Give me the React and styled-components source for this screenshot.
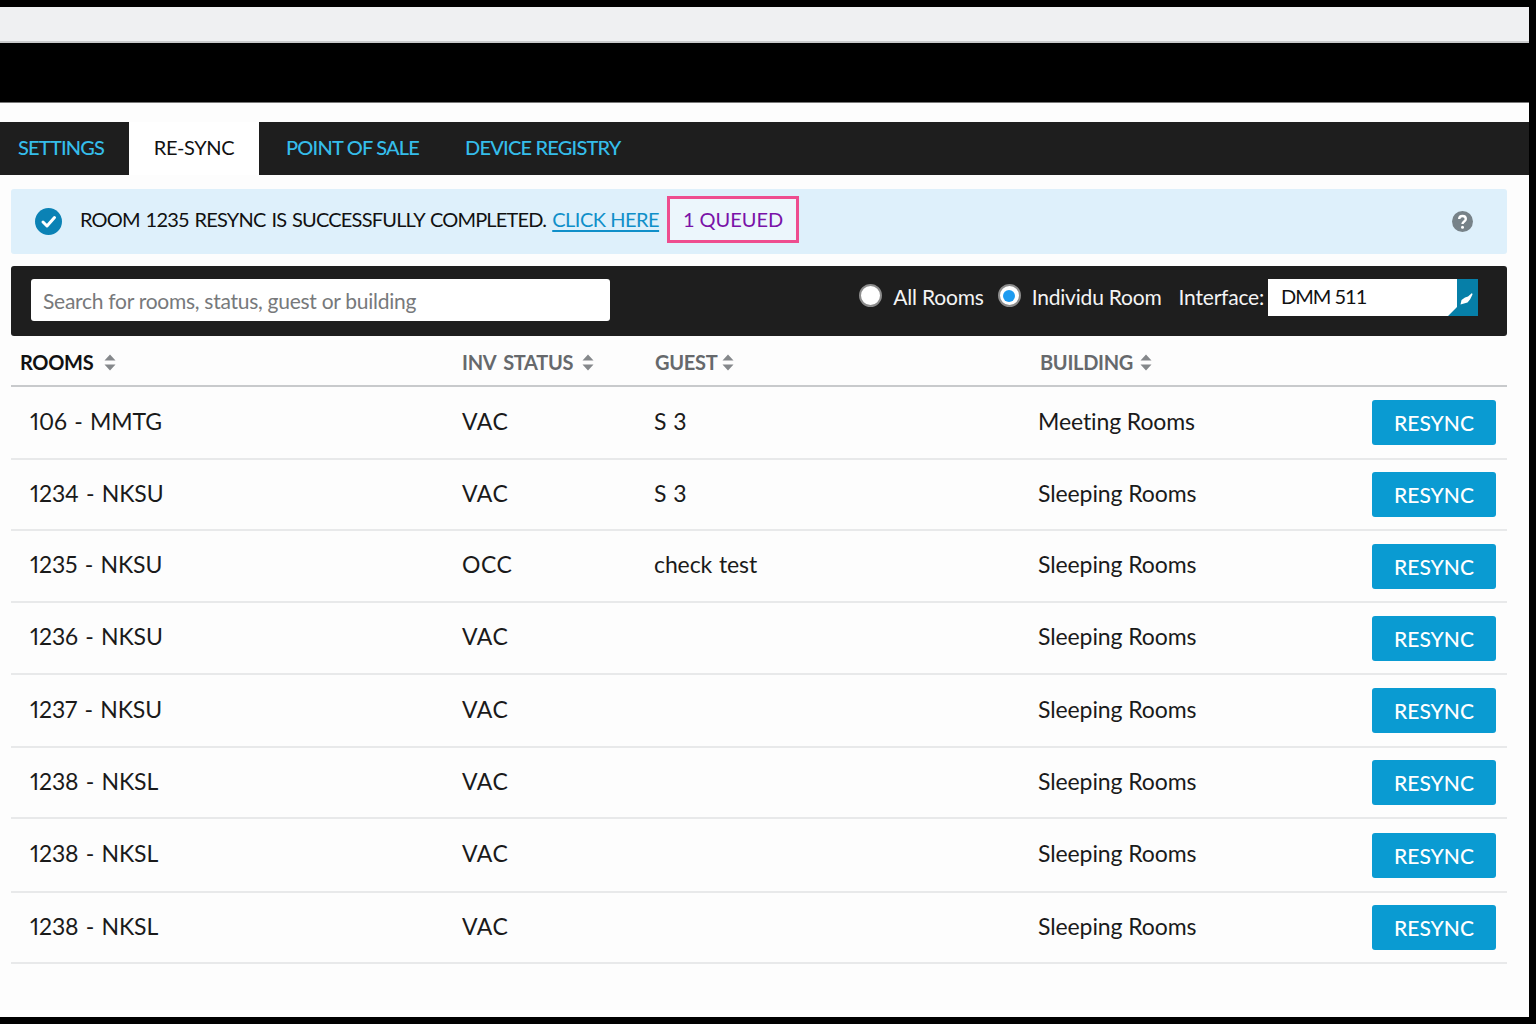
import React from 'react';
import styled, { createGlobalStyle } from 'styled-components';

const GlobalStyle = createGlobalStyle`
    html, body {
        margin: 0;
        padding: 0;
        background: #000;
    }
    body {
        font-family: Lato, "Open Sans", sans-serif;
    }
`

const Page = styled.div`
    width: 1529px;
    height: 1017px;
    background: #fdfdfd;
    overflow: hidden;
    display: flex;
    flex-direction: column;
`
const TopStrip = styled.div`
    height: 7px;
    background: #000;
`
const BrowserBar = styled.div`
    height: 34px;
    background: #eff0f2;
    border-bottom: 2px solid #c9cacc;
`
const BlackBand = styled.div`
    height: 59px;
    background: #000;
    border-bottom: 1px solid #777;
`
const Nav = styled.div`
    margin-top: 19px;
    height: 53px;
    background: #1e1e1e;
    display: flex;
    align-items: stretch;
    flex-shrink: 0;
`
const Tab = styled.div`
    display: flex;
    align-items: center;
    padding-bottom: 4px;
    box-sizing: border-box;
    margin-left: ${p => p.$gap || 0}px;
    font-size: 20px;
    letter-spacing: -0.8px;
    font-weight: 500;
    color: #35bdea;
`
const SettingsTab = styled(Tab)`
    width: 129px;
    padding-left: 18px;
`
const ActiveTab = styled(Tab)`
    width: 130px;
    justify-content: center;
    letter-spacing: -0.4px;
    font-weight: 400;
    color: #111;
    background: #fff;
`
const Content = styled.div`
    padding: 14px 22px 0 11px;
    display: flex;
    flex-direction: column;
`
const Alert = styled.div`
    height: 65px;
    box-sizing: border-box;
    background: #def0fb;
    border-radius: 3px;
    display: flex;
    align-items: center;
    padding: 0 34px 0 24px;
    font-size: 20px;
    color: #111;
`
const AlertText = styled.span`
    margin: 0 0 6px 18px;
    letter-spacing: -0.8px;
    word-spacing: 1.5px;
`
const AlertLink = styled.a`
    margin: 0 0 6px 6px;
    letter-spacing: -0.5px;
    color: #0f8fc9;
    text-decoration: underline;
    text-underline-offset: 3px;
`
const Queued = styled.div`
    margin: 0 0 5px 8px;
    width: 132px;
    height: 47px;
    box-sizing: border-box;
    border: 3px solid #ee4d8f;
    background: #ecf6fc;
    color: #7a12a8;
    display: flex;
    align-items: center;
    justify-content: center;
`
const Help = styled.svg`
    margin-left: auto;
`
const SearchBar = styled.div`
    margin-top: 12px;
    height: 70px;
    box-sizing: border-box;
    background: #1e1e1e;
    border-radius: 3px;
    display: flex;
    align-items: center;
    padding: 0 29px 2px 20px;
`
const SearchInput = styled.input`
    width: 579px;
    height: 42px;
    box-sizing: border-box;
    border: none;
    border-radius: 3px;
    background: #fff;
    padding: 0 12px;
    font-family: inherit;
    font-size: 21px;
    letter-spacing: -0.27px;
    &::placeholder {
        color: #77797b;
        opacity: 1;
    }
`
const Filters = styled.div`
    margin: 0 0 6px auto;
    display: flex;
    align-items: center;
    color: #f4f4f4;
    font-size: 21px;
    letter-spacing: -0.2px;
`
const FilterLabel = styled.span`
    margin-bottom: 2px;
`
const Radio = styled.span`
    width: 23px;
    height: 23px;
    box-sizing: border-box;
    border-radius: 50%;
    background: #fff;
    border: 2px solid #8c8c8c;
    display: flex;
    align-items: center;
    justify-content: center;
    margin-left: ${p => p.$gap || 0}px;
    margin-right: 11px;
    margin-bottom: 3px;
    &::after {
        content: '';
        width: 12px;
        height: 12px;
        border-radius: 50%;
        background: ${p => (p.$checked ? '#1d9bf0' : 'transparent')};
    }
`
const InterfaceLabel = styled(FilterLabel)`
    margin-left: 17px;
    margin-right: 4px;
`
const Select = styled.div`
    position: relative;
    width: 210px;
    height: 37px;
    background: #fff;
    color: #111;
    display: flex;
    align-items: center;
    padding: 0 0 2px 13px;
    box-sizing: border-box;
    font-size: 20px;
    letter-spacing: -1px;
`
const Caret = styled.svg`
    position: absolute;
    right: 0;
    top: 0;
`
const Header = styled.div`
    display: grid;
    grid-template-columns: 451px 193px 385px 1fr;
    height: 51px;
    align-items: center;
    border-bottom: 2px solid #c8cacc;
    box-sizing: border-box;
    padding-top: 3px;
`
const HeadCell = styled.div`
    display: flex;
    align-items: center;
    gap: ${p => p.$gap}px;
    font-size: 20px;
    font-weight: 700;
    letter-spacing: -0.3px;
    word-spacing: 3px;
    color: ${p => (p.$active ? '#111' : '#66696c')};
    padding-left: ${p => p.$indent || 0}px;
`
const Row = styled.div`
    display: grid;
    grid-template-columns: 451px 192px 384px 1fr 124px;
    align-items: center;
    height: ${p => p.$height}px;
    box-sizing: border-box;
    border-bottom: 2px solid #e8e9ea;
    padding-right: 11px;
    font-size: 23px;
    letter-spacing: -0.1px;
    color: #1a1a1a;
`
const Cell = styled.div`
    margin-bottom: 4px;
`
const RoomCell = styled(Cell)`
    padding-left: 19px;
    font-variant-numeric: proportional-nums;
    word-spacing: 1.5px;
`
const StatusCell = styled(Cell)`
    letter-spacing: 0.5px;
`
const GuestCell = styled(Cell)`
    word-spacing: 1px;
`
const Resync = styled.button`
    width: 124px;
    height: 45px;
    border: none;
    border-radius: 3px;
    background: #0a9bd2;
    color: #fff;
    font-family: inherit;
    font-size: 21px;
    font-weight: 500;
    padding: 0;
`

const rooms = [
    { room: '106 - MMTG', status: 'VAC', guest: 'S 3', building: 'Meeting Rooms', height: 73 },
    { room: '1234 - NKSU', status: 'VAC', guest: 'S 3', building: 'Sleeping Rooms', height: 71 },
    { room: '1235 - NKSU', status: 'OCC', guest: 'check test', building: 'Sleeping Rooms', height: 72 },
    { room: '1236 - NKSU', status: 'VAC', guest: '', building: 'Sleeping Rooms', height: 72 },
    { room: '1237 - NKSU', status: 'VAC', guest: '', building: 'Sleeping Rooms', height: 73 },
    { room: '1238 - NKSL', status: 'VAC', guest: '', building: 'Sleeping Rooms', height: 71 },
    { room: '1238 - NKSL', status: 'VAC', guest: '', building: 'Sleeping Rooms', height: 74 },
    { room: '1238 - NKSL', status: 'VAC', guest: '', building: 'Sleeping Rooms', height: 71 },
];

const SortIcon = () => (
    <svg width="12" height="17" viewBox="0 0 12 17">
        <path d="M6 0.5 L11.5 6.5 H0.5 Z M0.5 10.5 H11.5 L6 16.5 Z" fill="#85888b" />
    </svg>
);

const CheckIcon = () => (
    <svg width="27" height="27" viewBox="0 0 27 27">
        <circle cx="13.5" cy="13.5" r="13.5" fill="#0b82b5" />
        <path d="M8 14 L12 18 L19.5 9.5" fill="none" stroke="#fff" strokeWidth="3" strokeLinecap="round" strokeLinejoin="round" />
    </svg>
);

const App = () => {
    return (
        <Page>
            <GlobalStyle />
            <TopStrip />
            <BrowserBar />
            <BlackBand />

            {/* Tabs */}
            <Nav>
                <SettingsTab>SETTINGS</SettingsTab>
                <ActiveTab>RE-SYNC</ActiveTab>
                <Tab $gap={27}>POINT OF SALE</Tab>
                <Tab $gap={46}>DEVICE REGISTRY</Tab>
            </Nav>

            <Content>
                {/* Status message */}
                <Alert>
                    <CheckIcon />
                    <AlertText>ROOM 1235 RESYNC IS SUCCESSFULLY COMPLETED.</AlertText>
                    <AlertLink>CLICK HERE</AlertLink>
                    <Queued>1 QUEUED</Queued>
                    <Help width="21" height="21" viewBox="0 0 21 21">
                        <circle cx="10.5" cy="10.5" r="10.5" fill="#778288" />
                        <path d="M7.2 8 C7.2 3.9 13.8 3.9 13.8 8 C13.8 10.6 10.5 10.4 10.5 13" fill="none" stroke="#fff" strokeWidth="2.4" />
                        <circle cx="10.5" cy="16.2" r="1.5" fill="#fff" />
                    </Help>
                </Alert>

                {/* Search and filters */}
                <SearchBar>
                    <SearchInput placeholder="Search for rooms, status, guest or building" />
                    <Filters>
                        <Radio />
                        <FilterLabel>All Rooms</FilterLabel>
                        <Radio $checked $gap={14} />
                        <FilterLabel>Individu Room</FilterLabel>
                        <InterfaceLabel>Interface:</InterfaceLabel>
                        <Select>
                            DMM 511
                            <Caret width="30" height="37" viewBox="0 0 30 37">
                                <path d="M9 0 H30 V37 H0 L9 28 Z" fill="#067fa8" />
                                <path d="M12.5 25.5 L13.5 21 L17 18.5 L20 17.5 L24 14 L24.5 15.5 L22 20.5 L19.5 23.5 Z" fill="#fff" />
                            </Caret>
                        </Select>
                    </Filters>
                </SearchBar>

                {/* Room table */}
                <Header>
                    <HeadCell $active $indent={9} $gap={11}>ROOMS <SortIcon /></HeadCell>
                    <HeadCell $gap={9}>INV STATUS <SortIcon /></HeadCell>
                    <HeadCell $gap={5}>GUEST <SortIcon /></HeadCell>
                    <HeadCell $gap={7}>BUILDING <SortIcon /></HeadCell>
                </Header>
                {rooms.map((r, i) => (
                    <Row key={i} $height={r.height}>
                        <RoomCell>{r.room}</RoomCell>
                        <StatusCell>{r.status}</StatusCell>
                        <GuestCell>{r.guest}</GuestCell>
                        <Cell>{r.building}</Cell>
                        <Resync>RESYNC</Resync>
                    </Row>
                ))}
            </Content>
        </Page>
    );
};

export default App;
